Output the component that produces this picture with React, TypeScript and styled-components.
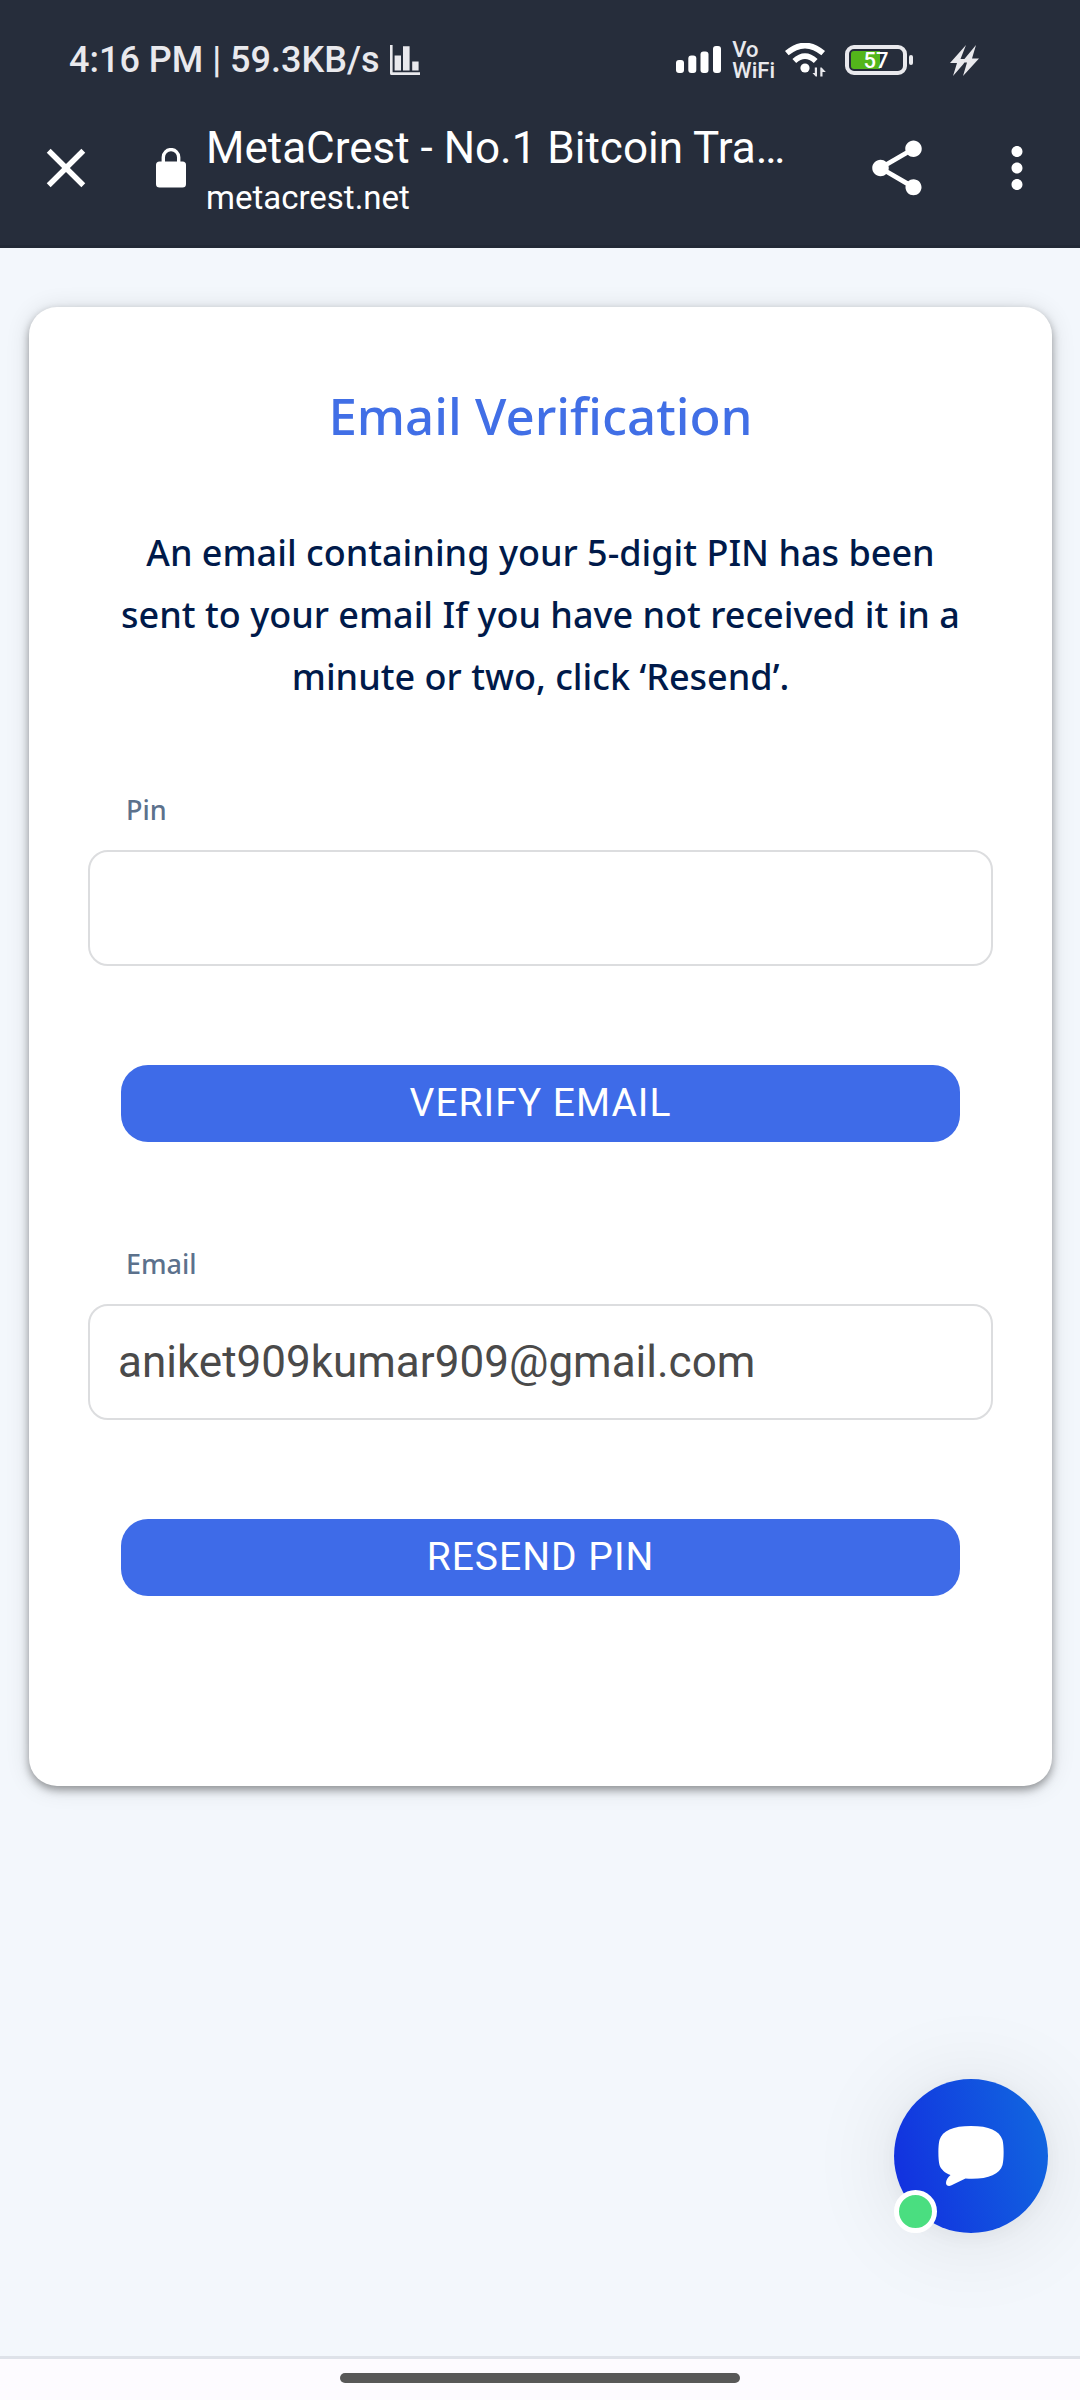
import React from "react";
import styled, { createGlobalStyle } from "styled-components";
import { MdClose, MdMoreVert, MdShare } from "react-icons/md";

const GlobalStyle = createGlobalStyle`
  *, *::before, *::after { box-sizing: border-box; }
  body {
    margin: 0;
    background: #f3f7fc;
    font-family: Roboto, sans-serif;
  }
`;

const Screen = styled.div`
  display: flex;
  flex-direction: column;
  min-height: 100vh;
`;

const TopArea = styled.header`
  background: #262d3b;
  color: #fff;
  box-shadow: inset 0 -3px 0 #222936;
`;

const StatusBar = styled.div`
  display: flex;
  align-items: center;
  justify-content: space-between;
  height: 88px;
  padding: 32px 101px 0 69px;
  color: #e9e9ed;
`;

const StatusGroup = styled.div<{ $gap: number }>`
  display: flex;
  align-items: center;
  gap: ${(p) => p.$gap}px;
`;

const Clock = styled.span`
  font-size: 36px;
  line-height: 56px;
  font-weight: 500;
  white-space: nowrap;
`;

const NetworkLabel = styled.span`
  display: flex;
  flex-direction: column;
  font-size: 22px;
  line-height: 21px;
  font-weight: 500;
`;

const Battery = styled.div`
  display: flex;
  align-items: center;
  gap: 2px;
  margin: 0 27px 0 8px;

  &::after {
    content: "";
    width: 4px;
    height: 10px;
    border-radius: 2px;
    background: #e9e9ed;
  }
`;

const BatteryCell = styled.span`
  width: 62px;
  height: 30px;
  border: 4px solid #e9e9ed;
  border-radius: 9px;
  padding: 2px;
`;

const BatteryFill = styled.span`
  display: block;
  height: 18px;
  border-radius: 3px;
  background: linear-gradient(90deg, #53b51b 58%, transparent 58%);
  color: #fff;
  font-size: 22px;
  line-height: 19px;
  font-weight: 500;
  text-align: center;
`;

const Toolbar = styled.div`
  display: flex;
  align-items: center;
  height: 160px;
  padding-right: 3px;
`;

const IconButton = styled.button<{ $width: number }>`
  display: flex;
  align-items: center;
  justify-content: center;
  flex: none;
  width: ${(p) => p.$width}px;
  height: 120px;
  padding: 0;
  border: 0;
  background: none;
  color: #fff;
`;

const SiteInfo = styled.div`
  display: flex;
  align-items: center;
  flex: 1;
  min-width: 0;
  gap: 20px;
  padding-left: 24px;

  svg { flex: none; }
`;

const SiteText = styled.div`
  min-width: 0;
  padding-top: 8px;
  white-space: nowrap;
`;

const SiteTitle = styled.div`
  font-size: 44px;
  line-height: 52px;
`;

const SiteHost = styled.div`
  font-size: 33px;
  line-height: 48px;
`;

const Main = styled.main`
  flex: 1;
  padding: 59px 28px 60px 29px;
`;

const Card = styled.section`
  padding: 70px 59px 190px;
  border-radius: 28px;
  background: #fff;
  box-shadow: 0 4px 8px rgba(0, 0, 0, 0.36), 0 2px 24px rgba(0, 0, 0, 0.12);
  font-family: "Noto Sans", sans-serif;
`;

const Heading = styled.h1`
  margin: 0;
  color: #416fe6;
  font-size: 51px;
  line-height: 76px;
  font-weight: 500;
  text-align: center;
`;

const Message = styled.p`
  margin: 69px 0 0;
  padding: 0 28px;
  color: #001a4a;
  font-size: 36px;
  line-height: 62px;
  font-weight: 500;
  text-align: center;
`;

const Form = styled.form<{ $space: number }>`
  display: flex;
  flex-direction: column;
  margin-top: ${(p) => p.$space}px;
`;

const Label = styled.label`
  padding-left: 38px;
  color: #5c718c;
  font-size: 27px;
  line-height: 40px;
  font-weight: 500;
`;

const TextInput = styled.input`
  width: 100%;
  height: 116px;
  margin-top: 20px;
  padding: 0 28px;
  border: 2px solid #dcdddf;
  border-radius: 20px;
  background: #fff;
  color: #4a4a4a;
  font-family: Roboto, sans-serif;
  font-size: 44px;
  outline: none;
`;

const ActionButton = styled.button`
  height: 77px;
  margin: 99px 33px 0;
  padding: 0;
  border: 0;
  border-radius: 27px;
  background: #3e6be8;
  color: #fff;
  font-family: Roboto, sans-serif;
  font-size: 39px;
  line-height: 77px;
  letter-spacing: 1px;
`;

const ChatButton = styled.button`
  position: fixed;
  right: 32px;
  bottom: 167px;
  display: flex;
  align-items: center;
  justify-content: center;
  width: 154px;
  height: 154px;
  padding: 0;
  border: 0;
  border-radius: 50%;
  background: linear-gradient(75deg, #1232df 10%, #1167e0 95%);
  box-shadow: 0 6px 90px rgba(0, 0, 20, 0.1), 0 4px 24px rgba(0, 0, 0, 0.05);
`;

const OnlineDot = styled.span`
  position: absolute;
  left: 0;
  bottom: 0;
  width: 43px;
  height: 43px;
  border: 5px solid #fff;
  border-radius: 50%;
  background: #4ade80;
`;

const NavBar = styled.footer`
  display: flex;
  justify-content: center;
  height: 44px;
  padding-top: 14px;
  border-top: 3px solid #dee2e9;
  background: #fdfbff;
`;

const NavHandle = styled.div`
  width: 37%;
  height: 10px;
  border-radius: 5px;
  background: #585858;
`;

const ChartIcon = () => (
  <svg width="30" height="30" viewBox="0 0 30 30" fill="currentColor" aria-hidden="true">
    <path d="M0 0h2.6v27.2H30V30H1.5A1.5 1.5 0 0 1 0 28.500zM4.600 10.500h6.400v15H4.600zM13 1.200h6.600v24.300H13zM22.200 16.500h6.400v9h-6.400z" />
  </svg>
);

const SignalIcon = () => (
  <svg width="46" height="30" viewBox="0 0 46 30" fill="#fff" aria-hidden="true">
    <rect x="0" y="15" width="8" height="13" rx="3" />
    <rect x="12.300" y="10.500" width="8" height="17.500" rx="3" />
    <rect x="24.500" y="6.500" width="8" height="21.500" rx="3" />
    <rect x="37" y="1" width="8" height="27" rx="3" />
  </svg>
);

const WifiIcon = () => (
  <svg width="42" height="34" viewBox="0 0 42 34" fill="none" aria-hidden="true">
    <path d="M1.800 10.200Q20 -5.200 38.200 10.200" stroke="#fff" strokeWidth="5.600" />
    <path d="M9.300 18Q20 8.200 30.700 18" stroke="#fff" strokeWidth="5.600" />
    <circle cx="20" cy="25" r="4.600" fill="#fff" />
    <path d="M32 24.500v9h-1.300L27.500 30h2.300v-5.500zM35.300 33.500v-9h1.300L40.800 29h-3.300v4.500z" fill="#e9e9ed" />
  </svg>
);

const ChargeIcon = () => (
  <svg width="29" height="31" viewBox="0 0 29 31" fill="#e9e9ed" aria-hidden="true">
    <path d="M16 0 0 18h7L3 31 13 19.500 17 14H10.500zM26 0 11.500 17.500H17L13 31 29 13.500H22z" />
  </svg>
);

const LockIcon = () => (
  <svg width="30" height="40" viewBox="0 0 30 40" aria-hidden="true">
    <rect x="0" y="13.500" width="30" height="26" rx="3.500" fill="#fff" />
    <path d="M7.300 15V9.300a7.700 7.700 0 0 1 15.400 0V15" fill="none" stroke="#fff" strokeWidth="3.400" />
  </svg>
);

const BubbleIcon = () => (
  <svg width="66" height="60" viewBox="0 0 66 60" fill="#fff" aria-hidden="true">
    <path d="M33 0C15 0 4.500 4.500 1.500 14 0 19 0 33 1.500 39 3 43.500 7 47 12.500 49 9.500 51.500 8 54.500 8 57c0 2.500 2.500 3.600 5 2.600L27.500 52.600C48 54 61.500 49 64.500 39 66 33 66 19 64.500 14 61.500 4.500 51 0 33 0z" />
  </svg>
);

export default function App() {
  return (
    <Screen>
      <GlobalStyle />
      <TopArea>
        <StatusBar>
          <StatusGroup $gap={10}>
            <Clock>4:16 PM | 59.3KB/s</Clock>
            <ChartIcon />
          </StatusGroup>
          <StatusGroup $gap={10}>
            <SignalIcon />
            <NetworkLabel>
              <span>Vo</span>
              <span>WiFi</span>
            </NetworkLabel>
            <WifiIcon />
            <Battery>
              <BatteryCell>
                <BatteryFill>57</BatteryFill>
              </BatteryCell>
            </Battery>
            <ChargeIcon />
          </StatusGroup>
        </StatusBar>
        <Toolbar>
          <IconButton type="button" $width={132} aria-label="Close">
            <MdClose size={66} />
          </IconButton>
          <SiteInfo>
            <LockIcon />
            <SiteText>
              <SiteTitle>MetaCrest - No.1 Bitcoin Tra…</SiteTitle>
              <SiteHost>metacrest.net</SiteHost>
            </SiteText>
          </SiteInfo>
          <IconButton type="button" $width={120} aria-label="Share">
            <MdShare size={66} />
          </IconButton>
          <IconButton type="button" $width={120} aria-label="More options">
            <MdMoreVert size={66} />
          </IconButton>
        </Toolbar>
      </TopArea>

      <Main>
        <Card>
          <Heading>Email Verification</Heading>
          <Message>
            An email containing your 5-digit PIN has been sent to your email If you have not
            received it in a minute or two, click ‘Resend’.
          </Message>
          <Form $space={82} onSubmit={(e) => e.preventDefault()}>
            <Label htmlFor="pin">Pin</Label>
            <TextInput id="pin" type="text" inputMode="numeric" />
            <ActionButton type="submit">VERIFY EMAIL</ActionButton>
          </Form>
          <Form $space={102} onSubmit={(e) => e.preventDefault()}>
            <Label htmlFor="email">Email</Label>
            <TextInput id="email" type="email" defaultValue="aniket909kumar909@gmail.com" />
            <ActionButton type="submit">RESEND PIN</ActionButton>
          </Form>
        </Card>
      </Main>

      <ChatButton type="button" aria-label="Open chat">
        <BubbleIcon />
        <OnlineDot />
      </ChatButton>

      <NavBar>
        <NavHandle />
      </NavBar>
    </Screen>
  );
}
